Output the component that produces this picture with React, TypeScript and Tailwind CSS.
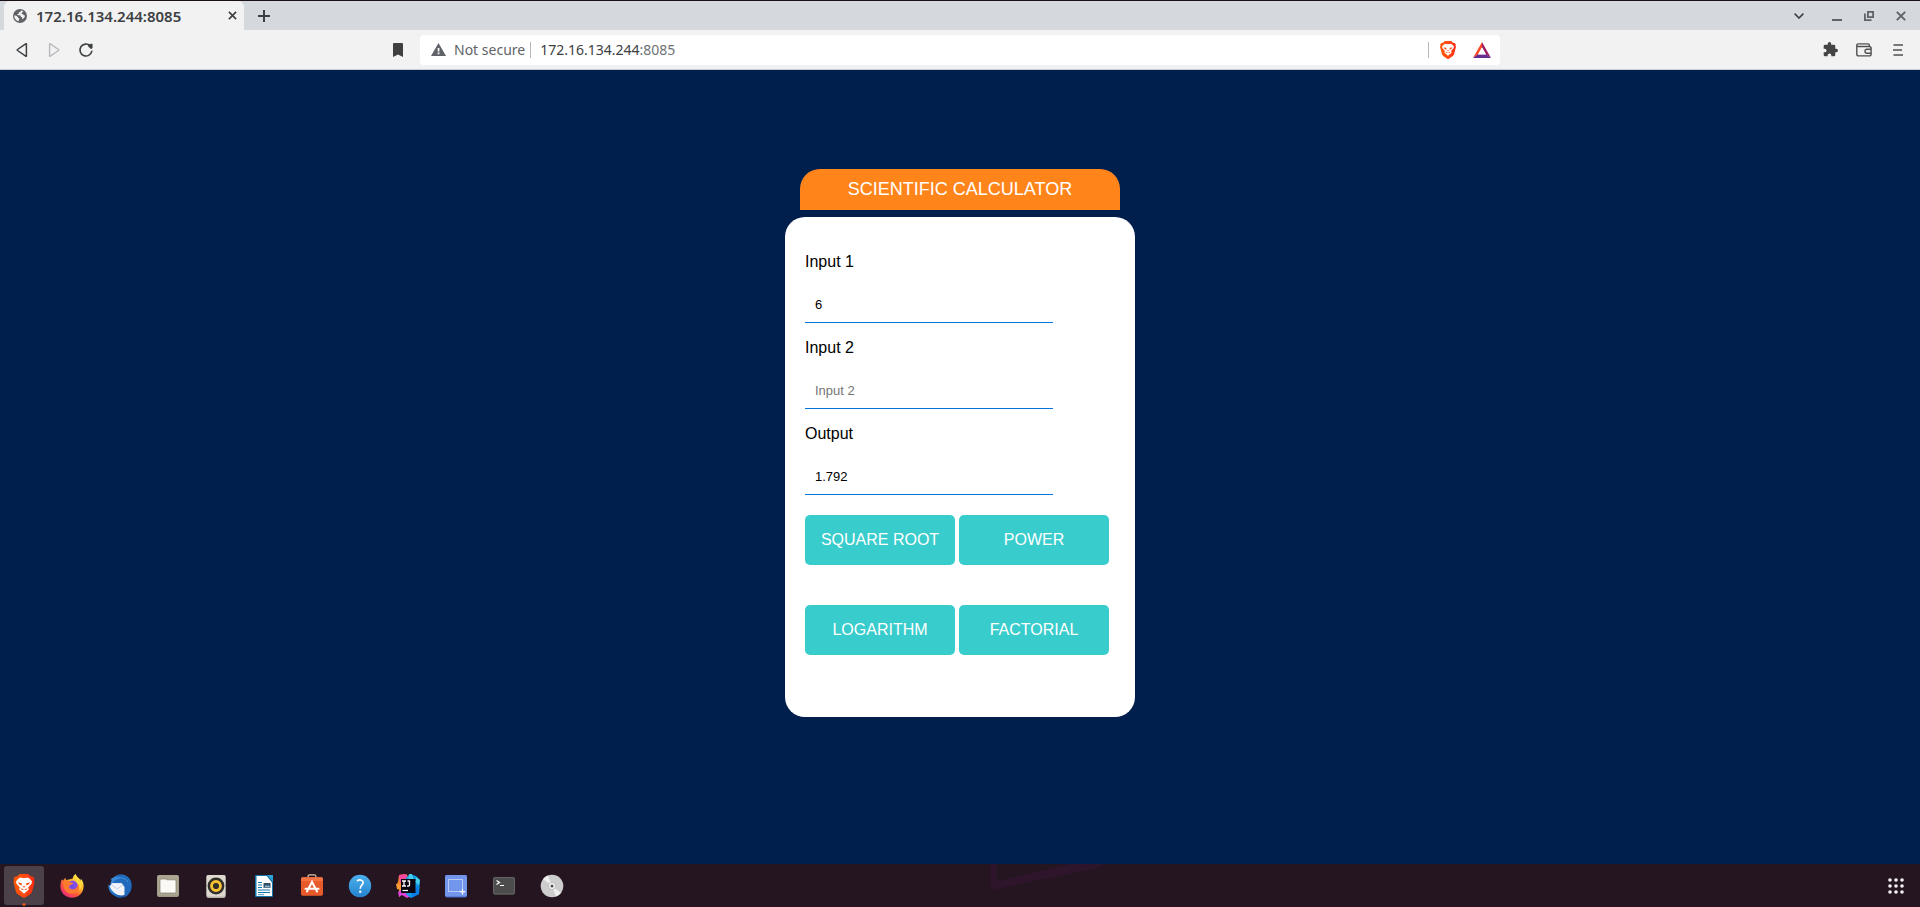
import React, { useState } from "react";

const UI_FONT = "font-['Noto_Sans',sans-serif]";

function IconButton({ label, className = "", children }: { label: string; className?: string; children: React.ReactNode }) {
  return (
    <button type="button" aria-label={label} className={`flex h-7 shrink-0 items-center justify-center ${className}`}>
      {children}
    </button>
  );
}

function BraveLogo({ id, className }: { id: string; className: string }) {
  return (
    <svg viewBox="0 0 24 24" className={className} aria-hidden="true">
      <defs>
        <linearGradient id={id} x1="0" y1="0" x2="1" y2="0">
          <stop offset="0" stopColor="#ff5601" />
          <stop offset=".5" stopColor="#ff4a10" />
          <stop offset="1" stopColor="#ff2712" />
        </linearGradient>
      </defs>
      <path d="M7.700 0h8.600l2.200 2.300q1.800-.4 2.900 1l1.100 1.300-.6 1.500.7 2-2.500 9.300q-.5 1.900-2.100 3L13.100 23.600q-1.100.7-2.200 0L6 20.400q-1.600-1.100-2.100-3L1.400 8.100l.7-2-.6-1.500 1.100-1.300q1.100-1.400 2.900-1z" fill={`url(#${id})`} />
      <path d="M8 3.500l4 .7 4-.7q2.400 1.300 4 4l-.4 1.900-3.400 4 .6 2.100-4.800 4.200-4.800-4.200.6-2.100-3.400-4L4 7.500q1.600-2.700 4-4z" fill="#fff" />
      <path d="M5.800 8.300l4.300 1.100-.5 1.900-1.900-.5zM18.200 8.300l-4.300 1.100.5 1.900 1.900-.5zM10.400 12.200h3.200L12 13.800zM8.500 14.200l3.500 1.200 3.500-1.200-1.400 1.900-2.100-.7-2.100.7z" fill="#ff4a10" />
    </svg>
  );
}

function TabStrip() {
  return (
    <div className="flex h-[30px] items-stretch border-t border-[#1a1118] bg-[#d5d8dc] pl-1 pr-[3px] text-[#3c4043]">
      <div className="flex w-60 items-center rounded-t-md bg-[#f2f2f2] pl-[9px] pr-1">
        <svg viewBox="0 0 14 14" className="mt-px h-[14px] w-[14px] shrink-0" aria-hidden="true">
          <circle cx="7" cy="7" r="7" fill="#5f6368" />
          <path d="M8.1 1.2C8 2.3 7.5 2.9 6.5 3.1c-.6.1-.9.5-.7 1.1.1.4-.2.8-.9.8-.5 0-.7.5-.4.9.3.4.8.4 1.5.4 1.300 0 1.700.6 1.800 1.300.1.5.5.6 1 .6.5 0 .6.5.4 1.100l-.3 1c1.900-.7 2.900-2.100 3.200-3.900-.8.3-1.500.1-1.700-.6-.1-.5-.4-.7-.9-.7-.7 0-1-.5-.8-1.200.1-.5.6-.7 1.100-.8.5-.1.5-.6.300-.9z" fill="#f2f2f2" />
          <path d="M1.200 6.600c1.100 0 2.500.3 3.300 1.100.5.5.4 1.200 1.100 1.400.8.200.9.8.4 1.400-.3.4-.3 1-.4 1.900C3 11.800 1.200 9.700 1.200 6.600z" fill="#f2f2f2" />
        </svg>
        <span className={`ml-[9px] flex-1 whitespace-nowrap text-[15px] font-semibold leading-5 ${UI_FONT}`}>172.16.134.244:8085</span>
        <IconButton label="Close tab" className="w-4">
          <svg viewBox="0 0 10 10" className="h-[9px] w-[9px]" fill="none" stroke="currentColor" strokeWidth="1.800" aria-hidden="true">
            <path d="M1 1l8 8M9 1L1 9" />
          </svg>
        </IconButton>
      </div>
      <IconButton label="New tab" className="mt-px w-10">
        <svg viewBox="0 0 12 12" className="h-3 w-3" fill="none" stroke="currentColor" strokeWidth="2" aria-hidden="true">
          <path d="M6 0v12M0 6h12" />
        </svg>
      </IconButton>
      <div className="mt-px flex flex-1 items-center justify-end">
        <IconButton label="Search tabs" className="mr-[6px] w-8">
          <svg viewBox="0 0 10 6" className="h-[6px] w-[10px]" fill="none" stroke="currentColor" strokeWidth="1.600" aria-hidden="true">
            <path d="M.6.6L5 5 9.400.6" />
          </svg>
        </IconButton>
        <IconButton label="Minimize" className="w-8">
          <svg viewBox="0 0 10 10" className="h-[10px] w-[10px]" aria-hidden="true">
            <path d="M0 8h10v2H0z" fill="#5f6368" />
          </svg>
        </IconButton>
        <IconButton label="Restore" className="w-8">
          <svg viewBox="0 0 10 10" className="h-[10px] w-[10px]" fill="none" stroke="#5f6368" strokeWidth="1.800" aria-hidden="true">
            <path d="M3.900.9h5.200v5.200H3.900zM.9 2.500v6.600h6.600" />
          </svg>
        </IconButton>
        <IconButton label="Close window" className="w-8">
          <svg viewBox="0 0 10 10" className="h-[10px] w-[10px]" fill="none" stroke="#5f6368" strokeWidth="1.900" aria-hidden="true">
            <path d="M.8.8l8.400 8.400M9.200.8L.8 9.200" />
          </svg>
        </IconButton>
      </div>
    </div>
  );
}

function Toolbar() {
  return (
    <div className={`grid h-10 grid-cols-[1fr_56.25%_1fr] items-center border-b border-[#c9cdd4] bg-[#f2f2f2] text-[#444] ${UI_FONT}`}>
      <div className="flex items-center pl-[6px]">
        <IconButton label="Back" className="w-8">
          <svg viewBox="0 0 14 16" className="h-4 w-[14px]" fill="none" stroke="#3c4043" strokeWidth="1.500" strokeLinejoin="round" aria-hidden="true">
            <path d="M10.700 1.800Q11.400 1.400 11.400 2.300v11.400q0 .9-.7.5L2.500 8.500q-.6-.5 0-1z" />
          </svg>
        </IconButton>
        <IconButton label="Forward" className="w-8">
          <svg viewBox="0 0 14 16" className="h-4 w-[14px]" fill="none" stroke="#b9bbbe" strokeWidth="1.500" strokeLinejoin="round" aria-hidden="true">
            <path d="M3.300 1.800q-.7-.4-.7.5v11.400q0 .9.7.5l8.200-5.700q.6-.5 0-1z" />
          </svg>
        </IconButton>
        <IconButton label="Reload" className="w-8">
          <svg viewBox="0 0 16 16" className="h-4 w-4" aria-hidden="true">
            <path d="M13.800 9.400A6 6 0 1 1 12 3.600" fill="none" stroke="#3c4043" strokeWidth="1.600" strokeLinecap="round" />
            <path d="M10.300 2.900L14.100 2v3.900q-.6.9-1.600.4L10.300 4.100z" fill="#3c4043" stroke="#3c4043" strokeWidth=".8" strokeLinejoin="round" />
          </svg>
        </IconButton>
        <span className="flex-1" />
        <IconButton label="Bookmark this page" className="mr-[6px] w-8">
          <svg viewBox="0 0 10 14" className="h-[14px] w-[10px]" aria-hidden="true">
            <path d="M1 0h8a1 1 0 0 1 1 1v13l-5-2.500L0 14V1a1 1 0 0 1 1-1z" fill="#3f3f3f" />
          </svg>
        </IconButton>
      </div>
      <div className="flex h-[30px] items-center rounded bg-white pr-px">
        <svg viewBox="0 0 15 13" className="ml-[11px] h-[13px] w-[15px]" aria-hidden="true">
          <path d="M7.500 0L15 13H0z" fill="#5f6368" />
          <path d="M6.700 5h1.700v3.400H6.700zM6.700 9.600h1.700v1.600H6.700z" fill="#fff" />
        </svg>
        <span className="ml-2 whitespace-nowrap text-sm text-[#5f6368]">Not secure</span>
        <span className="ml-[5px] h-4 w-px bg-[#b5b7ba]" />
        <span className="ml-[9px] flex-1 whitespace-nowrap text-sm text-[#3c4043]">
          172.16.134.244<span className="text-[#6d7175]">:8085</span>
        </span>
        <span className="mr-[2px] h-4 w-px bg-[#b5b7ba]" />
        <IconButton label="Brave Shields" className="w-[34px]">
          <BraveLogo id="brave-shield" className="h-[18px] w-[18px]" />
        </IconButton>
        <IconButton label="Brave Rewards" className="w-[34px]">
          <svg viewBox="0 0 18 16" className="h-4 w-[18px]" aria-hidden="true">
            <path d="M9 0L0 16l5-3.500L9 5.500z" fill="#ff4724" />
            <path d="M9 0l9 16-5-3.500L9 5.500z" fill="#9e1f63" />
            <path d="M0 16h18l-5-3.700H5z" fill="#662d91" />
            <path d="M9 5.300L5 12.400h8z" fill="#fff" />
          </svg>
        </IconButton>
      </div>
      <div className="flex items-center justify-end pr-[5px]">
        <IconButton label="Extensions" className="w-[34px]">
          <svg viewBox="1 1 22 22" className="h-[15px] w-[15px]" aria-hidden="true">
            <path d="M20.500 11H19V7a2 2 0 0 0-2-2h-4V3.500a2.500 2.500 0 0 0-5 0V5H4a2 2 0 0 0-2 2v3.800h1.500a2.700 2.700 0 0 1 0 5.400H2V20a2 2 0 0 0 2 2h3.800v-1.500a2.700 2.700 0 0 1 5.400 0V22H17a2 2 0 0 0 2-2v-4h1.500a2.500 2.500 0 0 0 0-5z" fill="#444" />
          </svg>
        </IconButton>
        <IconButton label="Wallet" className="w-[34px]">
          <svg viewBox="0 0 16 14" className="h-[14px] w-4" fill="none" stroke="#505050" strokeWidth="1.400" strokeLinejoin="round" aria-hidden="true">
            <path d="M13.300 3.500V2Q13.300.9 12 .9H2.300Q.8.9.8 2.400V11q0 1.900 1.900 1.900h10.500q1.900 0 1.900-1.900V5.400q0-1.900-1.900-1.900H2.500Q.8 3.500.8 2.200" />
            <path d="M15 6.200h-4a2 2 0 0 0 0 4h4" />
          </svg>
        </IconButton>
        <IconButton label="Menu" className="w-[34px]">
          <svg viewBox="0 0 10 12" className="h-3 w-[10px]" fill="none" stroke="#505050" strokeWidth="1.600" aria-hidden="true">
            <path d="M.5 1h9.500M0 6h9M.5 11h9.500" />
          </svg>
        </IconButton>
      </div>
    </div>
  );
}

function Field({ id, label, value, onChange, placeholder, readOnly }: { id: string; label: string; value: string; onChange?: (v: string) => void; placeholder?: string; readOnly?: boolean }) {
  return (
    <div className="flex flex-col items-start gap-[15px]">
      <label htmlFor={id} className="text-base leading-5 text-black">{label}</label>
      <input
        id={id}
        value={value}
        readOnly={readOnly}
        placeholder={placeholder}
        onChange={(e) => onChange?.(e.target.value)}
        className="h-9 w-4/5 border-b border-[#0074d9] px-[10px] text-[13px] text-black outline-none placeholder:text-[#757575]"
      />
    </div>
  );
}

function factorial(n: number): number {
  return n <= 1 ? 1 : n * factorial(n - 1);
}

function Calculator() {
  const [first, setFirst] = useState("6");
  const [second, setSecond] = useState("");
  const [output, setOutput] = useState("1.792");
  const a = Number(first);
  const b = Number(second);
  const show = (n: number) => setOutput(String(Math.round(n * 1000) / 1000));
  const operations = [
    { name: "SQUARE ROOT", run: () => show(Math.sqrt(a)) },
    { name: "POWER", run: () => show(Math.pow(a, b)) },
    { name: "LOGARITHM", run: () => show(Math.log(a)) },
    { name: "FACTORIAL", run: () => show(factorial(Math.min(a, 170))) },
  ];
  return (
    <main className="flex flex-1 flex-col items-center bg-[#001f4d] pt-[99px] pb-10 font-['Liberation_Sans',Arial,sans-serif]">
      <h1 className="w-80 rounded-t-[20px] bg-[#ff851b] pt-[10px] pb-[11px] text-center text-lg leading-5 text-white">SCIENTIFIC CALCULATOR</h1>
      <form onSubmit={(e) => e.preventDefault()} className="mt-[7px] w-[350px] rounded-[20px] bg-white px-5 pt-[35px] pb-[62px]">
        <div className="flex flex-col gap-[15px]">
          <Field id="input-1" label="Input 1" value={first} onChange={setFirst} placeholder="Input 1" />
          <Field id="input-2" label="Input 2" value={second} onChange={setSecond} placeholder="Input 2" />
          <Field id="output" label="Output" value={output} readOnly />
        </div>
        <div className="mt-5 flex flex-wrap gap-x-1 gap-y-10">
          {operations.map((op) => (
            <button key={op.name} type="button" onClick={op.run} className="h-[50px] w-[150px] rounded-[5px] bg-[#39cccc] text-base text-white">
              {op.name}
            </button>
          ))}
        </div>
      </form>
    </main>
  );
}

const ICON = "h-6 w-6";

const dockApps: { name: string; icon: React.ReactNode }[] = [
  {
    name: "Firefox",
    icon: (
      <svg viewBox="0 0 24 24" className={ICON} aria-hidden="true">
        <defs>
          <linearGradient id="ff-body" x1=".85" y1=".1" x2=".2" y2=".95">
            <stop offset="0" stopColor="#fff14f" />
            <stop offset=".35" stopColor="#ffb52c" />
            <stop offset=".65" stopColor="#ff5a38" />
            <stop offset="1" stopColor="#e9297c" />
          </linearGradient>
          <radialGradient id="ff-core">
            <stop offset="0" stopColor="#6b4be8" />
            <stop offset="1" stopColor="#9350e0" />
          </radialGradient>
        </defs>
        <path d="M2 5.300l1.500 1.400c.4-1.200 1.200-2.300 2-2.900l.4 2.400c1-.6 2-.9 3.200-.8l3.700-1C13 2.300 14.200 1 15.800 0c.4 2.200 2.200 3.300 3.800 5 .5.6.8 1.200 1.100 1.700l.1-2.100C23 7.200 23.800 10 23.600 13c-.5 6.200-5.400 10.800-11.600 10.800C5.500 23.800.4 18.800.4 12.600c0-2.700.6-5.300 1.600-7.300z" fill="url(#ff-body)" />
        <circle cx="12.500" cy="11.800" r="5.400" fill="url(#ff-core)" />
        <path d="M3.500 8C6 5.500 9 6.500 10.500 8.500l2.700.2c-.2 1.300-1.500 1.800-2.800 2.300-.6.400-.6 1.100-1.700 1.900 1 2.400 4.400 3.300 7 1.600 2-1.500 3-4 1.500-7 2.600 2 3.600 6 1.300 9.200-3 4.100-10.500 4.100-13.500-.7C3.500 13.500 2.700 11 3.500 8z" fill="#ff7a2e" />
        <path d="M16 1c0 2.500 3.900 4.200 5 8.500.7 3-.2 5.600-1.900 7.200 1-4.300-.6-7-3-9-1.700-1.800-1.500-4.200-.1-6.700z" fill="#ffd93b" />
      </svg>
    ),
  },
  {
    name: "Thunderbird",
    icon: (
      <svg viewBox="0 0 24 24" className={ICON} aria-hidden="true">
        <defs>
          <linearGradient id="tb-body" x1="0" y1="0" x2="1" y2="1">
            <stop offset="0" stopColor="#4d9be8" />
            <stop offset=".5" stopColor="#2276c9" />
            <stop offset="1" stopColor="#153f8d" />
          </linearGradient>
        </defs>
        <path d="M6 3.200C10-1 18.500-.4 22 5.200c3.200 5.300 2 12.300-3 16.300-3.500 2.800-8.500 3-12.300.5C2.300 19.500-.3 15 .6 10.500l2 1.200c-.4-2.200.1-4.200 1.200-5.700L2.500 4.900z" fill="url(#tb-body)" />
        <path d="M1.800 12.500L4 9l12 .2 1 2.300-.4 9.500c-5 1.500-11.800-.8-14.800-8.500z" fill="#f4f5fa" />
        <path d="M3 10.300l6.500 4.700 6.800-5" fill="none" stroke="#b6c4da" strokeWidth=".8" />
        <path d="M7 2.500l5.500 1.500L7.500 6.300l-3 3L13 8l3.500 5 .3 10c6-3 8.300-10.200 4.900-16.300C18.500 1 12-1 7 2.500z" fill="#2069bb" />
        <path d="M9 4.100c4.500-1.200 9 .3 11 4" stroke="#3f95e3" strokeWidth="1" fill="none" />
      </svg>
    ),
  },
  {
    name: "Files",
    icon: (
      <svg viewBox="0 0 24 24" className={ICON} aria-hidden="true">
        <rect x="1" y="1" width="22" height="22" rx="2" fill="#9d9785" />
        <rect x="1.500" y="1" width="21" height="20.500" rx="2" fill="#aaa491" />
        <path d="M4 6.500q0-1.500 1.500-1.500h4.500l1 .8h7.500q1.500 0 1.500 1.500v10.200q0 1.500-1.500 1.500h-13Q4 19 4 17.500z" fill="#fbf9f6" stroke="#88806f" strokeWidth=".7" />
      </svg>
    ),
  },
  {
    name: "Rhythmbox",
    icon: (
      <svg viewBox="0 0 24 24" className={ICON} aria-hidden="true">
        <rect x="2.500" y="1" width="19" height="23" rx="1.800" fill="#b8b3a6" />
        <rect x="2.500" y="1" width="19" height="21.500" rx="1.800" fill="#ded9cf" />
        <circle cx="12" cy="12" r="8.400" fill="#302e2b" />
        <circle cx="12" cy="12" r="4.400" fill="none" stroke="#f4c232" strokeWidth="3" />
        <circle cx="12" cy="12" r="2.800" fill="#31302b" />
      </svg>
    ),
  },
  {
    name: "LibreOffice Writer",
    icon: (
      <svg viewBox="0 0 24 24" className={ICON} aria-hidden="true">
        <path d="M4 1h11l6 7v14q0 1-1 1H4q-1 0-1-1V2q0-1 1-1z" fill="#1275ab" />
        <path d="M15 1h6v7z" fill="#2da3d5" />
        <path d="M4.500 2h10.200l5.300 6.600V22H4.500z" fill="#fff" />
        <path d="M6 8.500h4M6 11h4M6 13.500h4M6 16h12M6 18.500h12" stroke="#1275ab" strokeWidth="1.200" />
        <path d="M11.500 9h7v5h-7z" fill="#334f64" />
        <path d="M12 13.500l2-2.500 1.500 1 1-1 2 2.500z" fill="#8db3c5" />
        <path d="M6 20.700h6" stroke="#1275ab" strokeWidth=".8" />
      </svg>
    ),
  },
  {
    name: "Ubuntu Software",
    icon: (
      <svg viewBox="0 0 24 24" className={ICON} aria-hidden="true">
        <path d="M8 4V2.500Q8 .8 9.800.8h4.400Q16 .8 16 2.500V4" fill="none" stroke="#dfc5a5" strokeWidth="1.200" />
        <rect x="1" y="3.300" width="22" height="18.500" rx="1.800" fill="#e95a2b" />
        <path d="M1 5q0-1.700 1.700-1.700h18.600Q23 3.300 23 5v2H1z" fill="#f27446" />
        <path d="M7 17.500L12 8l5 9.500M5.500 14.700h13" fill="none" stroke="#fff" strokeWidth="2" strokeLinecap="round" />
      </svg>
    ),
  },
  {
    name: "Help",
    icon: (
      <svg viewBox="0 0 24 24" className={ICON} aria-hidden="true">
        <defs>
          <linearGradient id="help-body" x1="0" y1="0" x2="0" y2="1">
            <stop offset="0" stopColor="#4cb0ed" />
            <stop offset="1" stopColor="#2583cd" />
          </linearGradient>
        </defs>
        <circle cx="12" cy="12" r="11.200" fill="url(#help-body)" />
        <path d="M9 7c1.500-1 3-1.300 4.300-.8 2 .7 2.500 3 .7 4.700-1.400 1.300-1.800 1.700-1.800 3.900" fill="none" stroke="#fff" strokeWidth="1.700" />
        <circle cx="12.200" cy="17.800" r="1.200" fill="#fff" />
      </svg>
    ),
  },
  {
    name: "IntelliJ IDEA",
    icon: (
      <svg viewBox="0 0 24 24" className={ICON} aria-hidden="true">
        <path d="M3 1l7-1 5 6-9 7-6-2 2-3z" fill="#f5862a" />
        <path d="M3 1l7-1 2 5-8 4z" fill="#f947a0" />
        <path d="M0 10l6 1-1 5-4-1zM3 12h4l-1 8-3 3z" fill="#f99b35" />
        <path d="M2 18l6-4 5 5 2 3-4 2-5-3-3 2z" fill="#dd42d7" />
        <path d="M10 4l4-4 6 2 4 4-1 14-8 4-5-4z" fill="#129ce3" />
        <path d="M13 0l3 0 2 6-6 2zM20 3l4 3-1 5-4-3z" fill="#45cce9" />
        <path d="M16 18l6-7 1 9-8 4z" fill="#087de8" />
        <path d="M5 5h14.500v14H5z" fill="#0b0710" />
        <path d="M6 7h4M8 7v5M6 12h4M13.500 6.400V11q0 1.200-2.500 1M11.500 7h2" fill="none" stroke="#fff" strokeWidth="1.300" />
        <path d="M6.500 16.500h5.500" stroke="#fff" strokeWidth="1.200" />
      </svg>
    ),
  },
  {
    name: "Screenshot",
    icon: (
      <svg viewBox="0 0 24 24" className={ICON} aria-hidden="true">
        <rect x="1" y="1" width="22" height="22.500" rx="1.800" fill="#4267c5" />
        <rect x="1" y="1" width="22" height="21.500" rx="1.800" fill="#7396ed" />
        <rect x="4.500" y="5.500" width="14" height="12" fill="none" stroke="#fff" strokeWidth="1" strokeDasharray="1 1" />
        <path d="M18.500 15v5.500M15.700 17.700h5.600" stroke="#fff" strokeWidth="1.300" />
      </svg>
    ),
  },
  {
    name: "Terminal",
    icon: (
      <svg viewBox="0 0 24 24" className={ICON} aria-hidden="true">
        <rect x="1" y="3" width="22" height="18" rx="1.800" fill="#343434" />
        <rect x="1.500" y="3.500" width="21" height="16.500" rx="1.500" fill="#4b4c4b" stroke="#646464" />
        <path d="M4.500 6.500L7.500 8.500 4.500 10.500M8 11.500h4" fill="none" stroke="#fff" strokeWidth="1.200" />
      </svg>
    ),
  },
  {
    name: "Disc",
    icon: (
      <svg viewBox="0 0 24 24" className={ICON} aria-hidden="true">
        <circle cx="12" cy="12" r="11.300" fill="#cdcdcd" />
        <path d="M12 12L3 5A11.300 11.300 0 0 1 8 1.500zM12 12l9 7a11.300 11.300 0 0 1-5 3.500z" fill="#efefef" />
        <circle cx="12" cy="12" r="3.600" fill="#f7f7f7" stroke="#aaa" strokeWidth=".7" />
        <circle cx="12" cy="12" r="1.500" fill="#514c42" />
      </svg>
    ),
  },
];

function Dock() {
  return (
    <footer className="relative flex h-[43px] items-center justify-between overflow-hidden bg-[#241521] px-1">
      <svg viewBox="0 0 120 27" className="absolute left-[51.5%] top-0 h-[27px] w-[120px]" aria-hidden="true">
        <path d="M2 0h6v17L82 0h34l-12 5L2 26z" fill="#2e152b" />
      </svg>
      <div className="relative flex items-center gap-2">
        <button type="button" aria-label="Brave" className="relative flex h-[39px] w-10 items-center justify-center rounded-[3px] bg-[#4c4049]">
          <BraveLogo id="brave-dock" className="h-6 w-6" />
          <span className="absolute -bottom-px left-1/2 h-[3px] w-[3px] -translate-x-1/2 rounded-full bg-[#e95420]" />
        </button>
        {dockApps.map((app) => (
          <button key={app.name} type="button" aria-label={app.name} className="flex h-[39px] w-10 items-center justify-center">
            {app.icon}
          </button>
        ))}
      </div>
      <button type="button" aria-label="Show applications" className="relative flex h-[39px] w-10 items-center justify-center">
        <svg viewBox="0 0 16 16" className="h-4 w-4" fill="#f4f2f3" aria-hidden="true">
          {[2, 8, 14].map((y) => [2, 8, 14].map((x) => <circle key={`${x}-${y}`} cx={x} cy={y} r="1.800" />))}
        </svg>
      </button>
    </footer>
  );
}

export default function App() {
  return (
    <div className="flex min-h-screen flex-col">
      <header>
        <TabStrip />
        <Toolbar />
      </header>
      <Calculator />
      <Dock />
    </div>
  );
}
